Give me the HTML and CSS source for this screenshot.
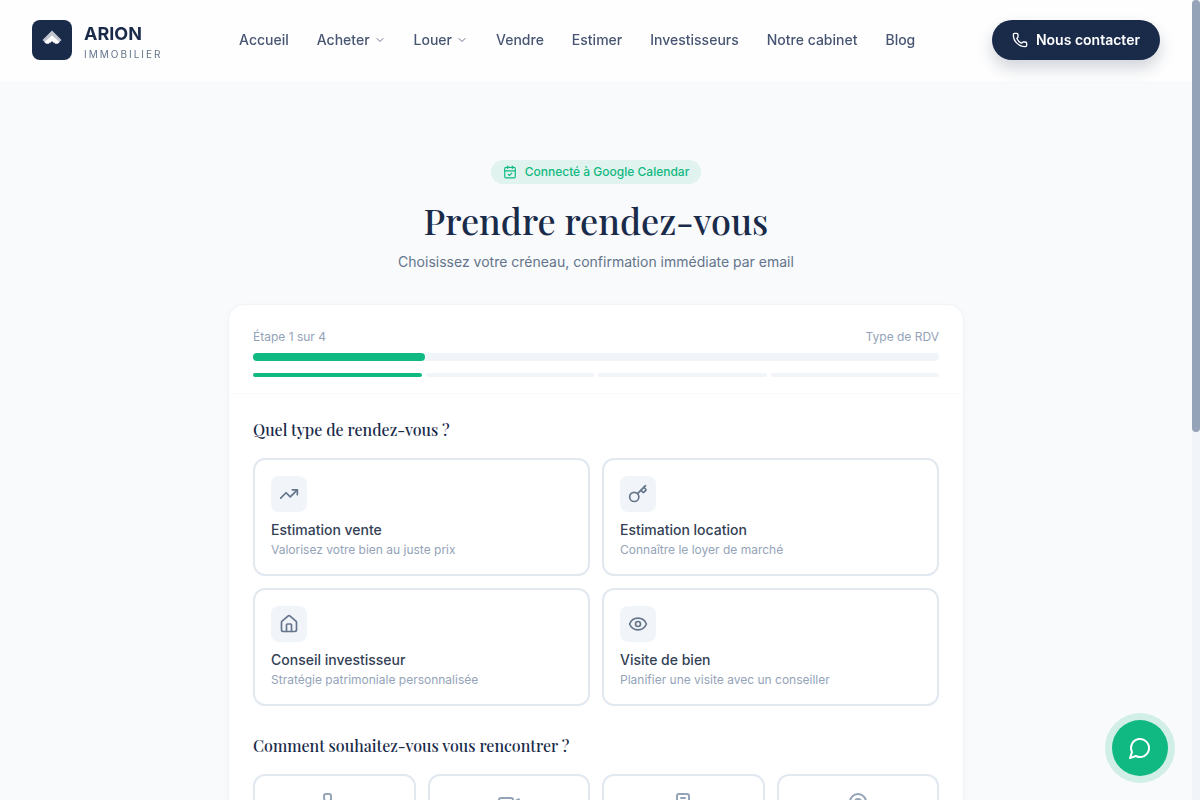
FILE: index.html
```html
<!DOCTYPE html>
<html lang="fr">
<head>
<meta charset="utf-8">
<meta name="viewport" content="width=device-width, initial-scale=1">
<title>Prendre rendez-vous</title>
<link rel="stylesheet" href="styles.css">
</head>
<body>
<div class="page">
  <header class="header">
    <a class="brand" href="#">
      <svg class="brand-mark" viewBox="0 0 40 40" aria-hidden="true">
        <rect width="40" height="40" rx="8" fill="#1a2b4a"/>
        <path d="M20 10.500 29.500 20 26.500 23H13.500L10.500 20Z" fill="#c0c5d0"/>
        <path d="M20 15.500 27.500 22 25.800 23.800H14.200L12.500 22Z" fill="#fff"/>
        <path d="M16.800 24 17.800 22.500 18.600 22.800 20 21 21.400 22.800 22.200 22.500 23.200 24Z" fill="#1a2b4a"/>
      </svg>
      <span class="brand-text">
        <span class="brand-name">ARION</span>
        <span class="brand-sub">IMMOBILIER</span>
      </span>
    </a>
    <nav class="nav">
      <a href="#">Accueil</a>
      <a href="#">Acheter <svg class="icon chevron" viewBox="0 0 24 24"><path d="m6 9 6 6 6-6"/></svg></a>
      <a href="#">Louer <svg class="icon chevron" viewBox="0 0 24 24"><path d="m6 9 6 6 6-6"/></svg></a>
      <a href="#">Vendre</a>
      <a href="#">Estimer</a>
      <a href="#">Investisseurs</a>
      <a href="#">Notre cabinet</a>
      <a href="#">Blog</a>
    </nav>
    <a class="contact" href="#">
      <svg class="icon icon-16" viewBox="0 0 24 24"><path d="M13.832 16.568a1 1 0 0 0 1.213-.303l.355-.465A2 2 0 0 1 17 15h3a2 2 0 0 1 2 2v3a2 2 0 0 1-2 2A18 18 0 0 1 2 4a2 2 0 0 1 2-2h3a2 2 0 0 1 2 2v3a2 2 0 0 1-.8 1.600l-.468.351a1 1 0 0 0-.292 1.233 14 14 0 0 0 6.392 6.384"/></svg>
      Nous contacter
    </a>
  </header>

  <main class="main">
    <div class="intro">
      <span class="badge">
        <svg class="icon icon-14" viewBox="0 0 24 24"><path d="M8 2v4M16 2v4"/><rect x="3" y="4" width="18" height="18" rx="2"/><path d="M3 10h18M9 16l2 2 4-4"/></svg>
        Connecté à Google Calendar
      </span>
      <h1>Prendre rendez-vous</h1>
      <p>Choisissez votre créneau, confirmation immédiate par email</p>
    </div>

    <section class="card">
      <div class="progress">
        <div class="progress-labels"><span>Étape 1 sur 4</span><span>Type de RDV</span></div>
        <div class="bar"><div class="bar-fill"></div></div>
        <div class="steps"><span class="step done"></span><span class="step"></span><span class="step"></span><span class="step"></span></div>
      </div>
      <div class="card-body">
        <h2>Quel type de rendez-vous ?</h2>
        <div class="types">
          <button class="type" type="button">
            <span class="tile"><svg class="icon icon-20" viewBox="0 0 24 24"><path d="M22 7 13.500 15.500 8.500 10.500 2 17"/><path d="M16 7h6v6"/></svg></span>
            <span class="type-name">Estimation vente</span>
            <span class="type-desc">Valorisez votre bien au juste prix</span>
          </button>
          <button class="type" type="button">
            <span class="tile"><svg class="icon icon-20" viewBox="0 0 24 24"><path d="m15.500 7.500 2.300 2.300a1 1 0 0 0 1.400 0l2.100-2.100a1 1 0 0 0 0-1.400L19 4"/><path d="m21 2-9.600 9.600"/><circle cx="7.500" cy="15.500" r="5.500"/></svg></span>
            <span class="type-name">Estimation location</span>
            <span class="type-desc">Connaître le loyer de marché</span>
          </button>
          <button class="type" type="button">
            <span class="tile"><svg class="icon icon-20" viewBox="0 0 24 24"><path d="M15 21v-8a1 1 0 0 0-1-1h-4a1 1 0 0 0-1 1v8"/><path d="M3 10a2 2 0 0 1 .709-1.528l7-5.999a2 2 0 0 1 2.582 0l7 5.999A2 2 0 0 1 21 10v9a2 2 0 0 1-2 2H5a2 2 0 0 1-2-2z"/></svg></span>
            <span class="type-name">Conseil investisseur</span>
            <span class="type-desc">Stratégie patrimoniale personnalisée</span>
          </button>
          <button class="type" type="button">
            <span class="tile"><svg class="icon icon-20" viewBox="0 0 24 24"><path d="M2.062 12.348a1 1 0 0 1 0-.696 10.750 10.750 0 0 1 19.876 0 1 1 0 0 1 0 .696 10.750 10.750 0 0 1-19.876 0"/><circle cx="12" cy="12" r="3"/></svg></span>
            <span class="type-name">Visite de bien</span>
            <span class="type-desc">Planifier une visite avec un conseiller</span>
          </button>
        </div>

        <h2 class="second">Comment souhaitez-vous vous rencontrer ?</h2>
        <div class="modes">
          <button class="mode" type="button" aria-label="Téléphone"><svg class="icon icon-24" viewBox="0 0 24 24"><path d="M13.832 16.568a1 1 0 0 0 1.213-.303l.355-.465A2 2 0 0 1 17 15h3a2 2 0 0 1 2 2v3a2 2 0 0 1-2 2A18 18 0 0 1 2 4a2 2 0 0 1 2-2h3a2 2 0 0 1 2 2v3a2 2 0 0 1-.8 1.600l-.468.351a1 1 0 0 0-.292 1.233 14 14 0 0 0 6.392 6.384"/></svg></button>
          <button class="mode" type="button" aria-label="Visio"><svg class="icon icon-24" viewBox="0 0 24 24"><path d="m16 13 5.223 3.482a.5.5 0 0 0 .777-.416V7.870a.5.5 0 0 0-.752-.432L16 10.500"/><rect x="2" y="6" width="14" height="12" rx="2"/></svg></button>
          <button class="mode" type="button" aria-label="Agence"><svg class="icon icon-24" viewBox="0 0 24 24"><path d="M6 22V4a2 2 0 0 1 2-2h8a2 2 0 0 1 2 2v18Z"/><path d="M6 12H4a2 2 0 0 0-2 2v6a2 2 0 0 0 2 2h2M18 9h2a2 2 0 0 1 2 2v9a2 2 0 0 1-2 2h-2M10 6h4M10 10h4M10 14h4M10 18h4"/></svg></button>
          <button class="mode" type="button" aria-label="Sur place"><svg class="icon icon-24" viewBox="0 0 24 24"><path d="M20 10c0 4.993-5.539 10.193-7.399 11.799a1 1 0 0 1-1.202 0C9.539 20.193 4 14.993 4 10a8 8 0 0 1 16 0"/><circle cx="12" cy="10" r="3"/></svg></button>
        </div>
      </div>
    </section>
  </main>
</div>
<div class="scrollbar" aria-hidden="true"><div class="scrollbar-thumb"></div></div>
<button class="chat" type="button" aria-label="Chat"><svg class="icon icon-24" viewBox="0 0 24 24"><path d="M7.900 20A9 9 0 1 0 4 16.100L2 22Z"/></svg></button>
</body>
</html>
```
FILE: styles.css
```css
:root {
  --navy: #1a2b4a;
  --green: #10b981;
  --slate-50: #f8fafc;
  --slate-100: #f1f5f9;
  --slate-200: #e2e8f0;
  --slate-400: #94a3b8;
  --slate-500: #64748b;
}

* { box-sizing: border-box; }

body {
  display: flex;
  height: 100vh;
  margin: 0;
  background: var(--slate-50);
  color: var(--navy);
  font-family: Inter, "Liberation Sans", sans-serif;
  font-size: 14px;
  line-height: 20px;
}

a { color: inherit; text-decoration: none; }
button { font: inherit; color: inherit; cursor: pointer; }

.page { flex: 1; min-width: 0; overflow-y: auto; scrollbar-width: none; }
.scrollbar { flex: none; width: 8px; background: var(--slate-100); }
.scrollbar-thumb { height: 54%; border-radius: 4px; background: var(--slate-400); }

.icon {
  flex: none;
  fill: none;
  stroke: currentColor;
  stroke-width: 2;
  stroke-linecap: round;
  stroke-linejoin: round;
}
.icon-14 { width: 14px; height: 14px; }
.icon-16 { width: 16px; height: 16px; }
.icon-20 { width: 20px; height: 20px; }
.icon-24 { width: 24px; height: 24px; }

.header {
  position: sticky;
  top: 0;
  z-index: 2;
  display: flex;
  align-items: center;
  justify-content: space-between;
  padding: 18px 32px;
  background: #fefefe;
  border-bottom: 1px solid #fefefe;
}
.brand { display: flex; align-items: center; gap: 12px; }
.brand-mark { width: 40px; height: 40px; }
.brand-text { display: flex; flex-direction: column; gap: 2px; padding-top: 6px; }
.brand-name { font-size: 18px; font-weight: 700; line-height: 20px; }
.brand-sub { font-size: 10px; line-height: 16px; letter-spacing: 2px; color: var(--slate-500); }

.nav { display: flex; gap: 28px; font-weight: 500; color: #475573; }
.nav a { display: flex; align-items: center; gap: 4px; }
.chevron { width: 12px; height: 12px; opacity: 0.8; }

.contact {
  display: flex;
  align-items: center;
  gap: 8px;
  padding: 10px 20px;
  border-radius: 20px;
  background: var(--navy);
  color: #fff;
  font-weight: 600;
  box-shadow: 0 8px 16px rgba(26, 43, 74, 0.2);
}

.main { max-width: 768px; min-height: 1400px; margin: 0 auto; padding: 79px 16px 48px; }

.intro { display: flex; flex-direction: column; align-items: center; text-align: center; }
.badge {
  display: inline-flex;
  align-items: center;
  gap: 8px;
  padding: 4px 12px;
  border-radius: 12px;
  background: #e1f3ee;
  color: var(--green);
  font-size: 12px;
  font-weight: 500;
  line-height: 16px;
}
h1, h2 { font-family: "Playfair Display", "Liberation Serif", serif; font-weight: 500; }
h1 { margin: 16px 0 12px; font-size: 36px; line-height: 40px; }
.intro p { margin: 0; color: var(--slate-500); }

.card {
  margin-top: 32px;
  background: #fff;
  border: 1px solid var(--slate-100);
  border-radius: 16px;
  box-shadow: 0 1px 4px rgba(26, 43, 74, 0.03);
}
.progress { padding: 24px 24px 16px; border-bottom: 1px solid var(--slate-50); }
.progress-labels {
  display: flex;
  justify-content: space-between;
  margin-bottom: 8px;
  font-size: 12px;
  line-height: 16px;
  color: var(--slate-400);
}
.bar { height: 8px; border-radius: 4px; background: var(--slate-100); }
.bar-fill { width: 25%; height: 100%; border-radius: 4px; background: var(--green); }
.steps { display: grid; grid-template-columns: repeat(4, 1fr); gap: 4px; margin-top: 12px; }
.step { height: 4px; border-radius: 2px; background: var(--slate-100); }
.step.done { background: var(--green); }

.card-body { padding: 24px; }
h2 { margin: 0 0 16px; font-size: 16px; line-height: 24px; }
h2.second { margin-top: 28px; }

.types { display: grid; grid-template-columns: 1fr 1fr; gap: 12px; }
.type, .mode { background: #fff; border: 2px solid var(--slate-200); border-radius: 12px; padding: 16px; }
.type { display: flex; flex-direction: column; align-items: flex-start; text-align: left; }
.tile {
  display: grid;
  place-items: center;
  width: 36px;
  height: 36px;
  margin-bottom: 8px;
  border-radius: 8px;
  background: var(--slate-100);
  color: var(--slate-500);
}
.type-name { font-weight: 500; color: #334155; }
.type-desc { margin-top: 2px; font-size: 12px; line-height: 16px; color: var(--slate-400); }

.modes { display: grid; grid-template-columns: repeat(4, 1fr); gap: 12px; }
.mode { display: flex; justify-content: center; align-items: flex-start; min-height: 80px; color: var(--slate-400); }

.chat {
  position: fixed;
  right: 32px;
  bottom: 24px;
  z-index: 3;
  display: grid;
  place-items: center;
  width: 56px;
  height: 56px;
  padding: 0;
  border: 0;
  border-radius: 50%;
  background: var(--green);
  color: #fff;
  box-shadow: 0 0 0 7px rgba(16, 185, 129, 0.17);
}
```
